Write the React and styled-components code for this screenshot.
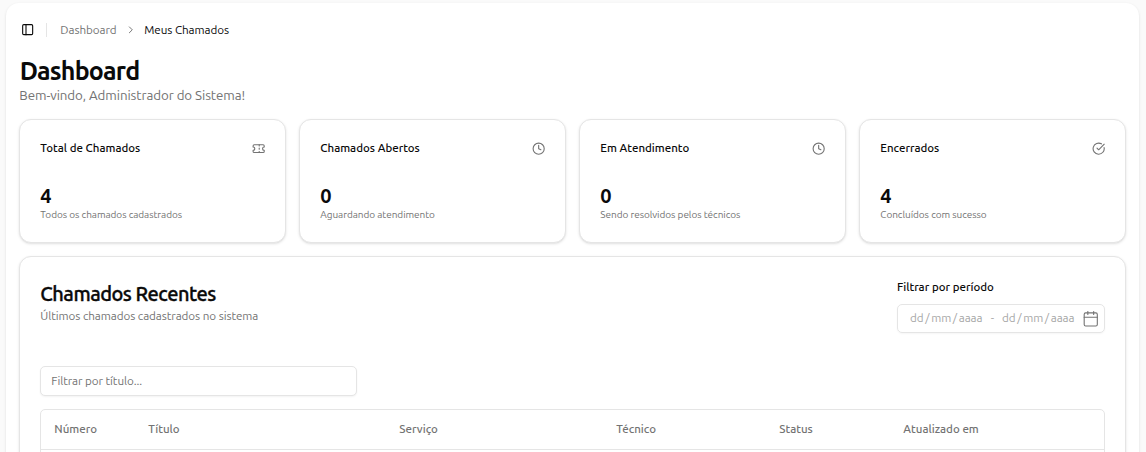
import React from "react";
import styled, { createGlobalStyle } from "styled-components";
import { PanelLeft, ChevronRight, Ticket, Clock, CircleCheckBig, Calendar } from "lucide-react";

const GlobalStyle = createGlobalStyle`
  * { box-sizing: border-box; }
  body {
    margin: 0;
    background: #fafafa;
    color: #0a0a0a;
    font-family: Ubuntu, "Noto Sans", sans-serif;
    font-size: 11.67px;
  }
`;

const Screen = styled.div`
  height: 100vh;
  overflow: hidden;
  padding: 3px 6.67px 0 6px;
`;

const Inset = styled.main`
  min-height: 100%;
  background: #fff;
  border-radius: 13px;
  box-shadow: 0 1px 3px rgba(0, 0, 0, 0.1), 0 1px 2px -1px rgba(0, 0, 0, 0.1);
`;

const TopBar = styled.header`
  display: flex;
  align-items: center;
  height: 53px;
  padding: 0 15px;
`;

const Divider = styled.span`
  width: 1px;
  height: 14px;
  margin: 0 13px 0 12px;
  background: #e5e5e5;
`;

const Crumb = styled.span`
  line-height: 16px;
  letter-spacing: -0.06px;
  color: ${(p) => (p.$current ? "#0a0a0a" : "#737373")};
`;

const CrumbArrow = styled(ChevronRight)`
  margin: 0 8px;
  color: #737373;
`;

const Content = styled.div`
  padding: 0 13.33px;
`;

const PageTitle = styled.h1`
  margin: 0;
  padding-left: 0.3px;
  font-size: 25px;
  line-height: 30px;
  font-weight: 600;
  letter-spacing: -0.8px;
`;

const Welcome = styled.p`
  margin: 0 0 13px;
  font-size: 13.33px;
  line-height: 20px;
  letter-spacing: -0.07px;
  color: #737373;
`;

const StatGrid = styled.section`
  display: grid;
  grid-template-columns: repeat(4, 1fr);
  gap: 13.33px;
`;

const Card = styled.article`
  background: #fff;
  border: 1px solid #e5e5e5;
  border-radius: 12px;
  box-shadow: 0 1px 3px rgba(0, 0, 0, 0.1), 0 1px 2px -1px rgba(0, 0, 0, 0.1);
`;

const StatCard = styled(Card)`
  height: 124px;
  padding: 20px 20px 0;
`;

const StatHead = styled.div`
  display: flex;
  align-items: center;
  justify-content: space-between;
  height: 17px;
  color: #737373;
`;

const StatTitle = styled.h2`
  margin: 0 0 2px;
  font-size: 11.5px;
  font-weight: 500;
  color: #0a0a0a;
`;

const StatValue = styled.div`
  margin-top: 26px;
  font-size: 20px;
  line-height: 26px;
  font-weight: 700;
`;

const StatNote = styled.p`
  margin: -1px 0 0;
  font-size: 10px;
  line-height: 13px;
  letter-spacing: -0.055px;
  color: #737373;
`;

const RecentCard = styled(Card)`
  margin-top: 13px;
  padding: 20px;
`;

const RecentHead = styled.div`
  display: flex;
  justify-content: space-between;
  height: 89px;
`;

const RecentTitle = styled.h2`
  margin: 4px 0 0;
  font-size: 20px;
  line-height: 26px;
  font-weight: 500;
  letter-spacing: -0.5px;
  -webkit-text-stroke: 0.35px currentColor;
`;

const RecentNote = styled.p`
  margin: 0;
  line-height: 17px;
  letter-spacing: -0.06px;
  color: #737373;
`;

const Period = styled.div`
  width: 208px;
`;

const PeriodLabel = styled.div`
  margin-top: 1px;
  font-size: 11.5px;
  line-height: 17px;
  font-weight: 500;
`;

const DateRange = styled.div`
  display: flex;
  align-items: center;
  height: 29px;
  margin-top: 9px;
  padding: 0 5px 0 12px;
  border: 1px solid #e5e5e5;
  border-radius: 5px;
  color: #a6a6a6;
  box-shadow: 0 1px 2px rgba(0, 0, 0, 0.04);
`;

const DateText = styled.span`
  width: 73px;
  margin-bottom: 3px;
  white-space: nowrap;
  letter-spacing: -0.05px;
`;

const Slash = styled.span`
  padding: 0 1.67px;
`;

const Dash = styled.span`
  width: 19px;
  margin-bottom: 3px;
  text-align: center;
`;

const CalendarIcon = styled(Calendar)`
  margin: 1px 0 0 auto;
  color: #737373;
`;

const SearchInput = styled.input`
  display: block;
  width: 317px;
  height: 30px;
  padding: 0 10px 2px;
  border: 1px solid #e5e5e5;
  border-radius: 5px;
  font: inherit;
  letter-spacing: -0.05px;
  box-shadow: 0 1px 2px rgba(0, 0, 0, 0.05);
  &::placeholder { color: #737373; opacity: 1; }
`;

const TableFrame = styled.div`
  min-height: 80px;
  margin-top: 13px;
  border: 1px solid #e5e5e5;
  border-radius: 5px;
`;

const TableHead = styled.div`
  display: grid;
  grid-template-columns: 94px 251px 217px 163px 124px 1fr;
  align-items: center;
  height: 40px;
  padding: 0 0 2px 13px;
  border-bottom: 1px solid #e5e5e5;
  color: #737373;
  font-size: 11.5px;
  font-weight: 500;
`;

const stats = [
  { title: "Total de Chamados", value: 4, note: "Todos os chamados cadastrados", Icon: Ticket },
  { title: "Chamados Abertos", value: 0, note: "Aguardando atendimento", Icon: Clock },
  { title: "Em Atendimento", value: 0, note: "Sendo resolvidos pelos técnicos", Icon: Clock },
  { title: "Encerrados", value: 4, note: "Concluídos com sucesso", Icon: CircleCheckBig },
];

const columns = ["Número", "Título", "Serviço", "Técnico", "Status", "Atualizado em"];

function DatePlaceholder() {
  return (
    <DateText>
      dd<Slash>/</Slash>mm<Slash>/</Slash>aaaa
    </DateText>
  );
}

export default function App() {
  return (
    <>
      <GlobalStyle />
      <Screen>
        <Inset>
          <TopBar>
            <PanelLeft size={13.33} />
            <Divider />
            <Crumb>Dashboard</Crumb>
            <CrumbArrow size={11.67} />
            <Crumb $current>Meus Chamados</Crumb>
          </TopBar>
          <Content>
            <PageTitle>Dashboard</PageTitle>
            <Welcome>Bem-vindo, Administrador do Sistema!</Welcome>
            <StatGrid>
              {stats.map(({ title, value, note, Icon }) => (
                <StatCard key={title}>
                  <StatHead>
                    <StatTitle>{title}</StatTitle>
                    <Icon size={13.33} />
                  </StatHead>
                  <StatValue>{value}</StatValue>
                  <StatNote>{note}</StatNote>
                </StatCard>
              ))}
            </StatGrid>
            <RecentCard>
              <RecentHead>
                <div>
                  <RecentTitle>Chamados Recentes</RecentTitle>
                  <RecentNote>Últimos chamados cadastrados no sistema</RecentNote>
                </div>
                <Period>
                  <PeriodLabel>Filtrar por período</PeriodLabel>
                  <DateRange>
                    <DatePlaceholder />
                    <Dash>-</Dash>
                    <DatePlaceholder />
                    <CalendarIcon size={17.5} strokeWidth={1.5} />
                  </DateRange>
                </Period>
              </RecentHead>
              <SearchInput placeholder="Filtrar por título..." />
              <TableFrame>
                <TableHead>
                  {columns.map((label) => (
                    <span key={label}>{label}</span>
                  ))}
                </TableHead>
              </TableFrame>
            </RecentCard>
          </Content>
        </Inset>
      </Screen>
    </>
  );
}
